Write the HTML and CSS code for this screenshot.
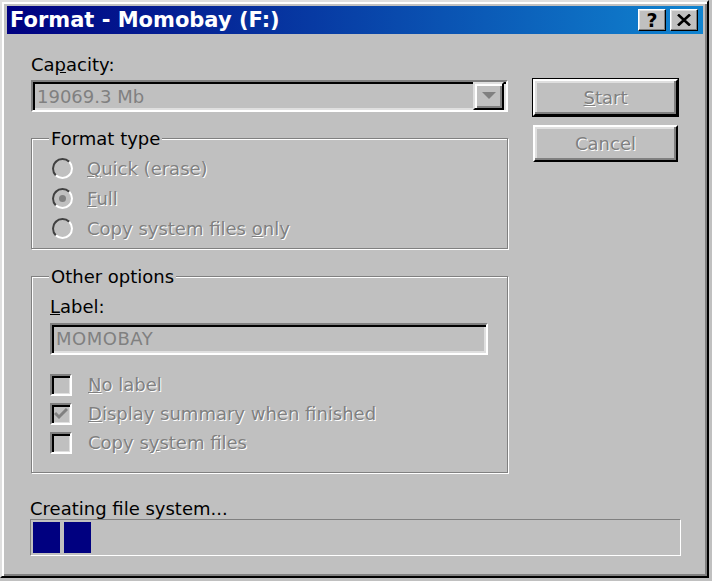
FILE: index.html
```html
<!DOCTYPE html>
<html lang="en">
<head>
    <meta charset="UTF-8">
    <title>Format - Momobay (F:)</title>
    <link rel="stylesheet" href="styles.css">
</head>
<body>
    <div class="window">
        <div class="titlebar">
            <span class="title">Format - Momobay (F:)</span>
            <div class="title-btns">
                <span class="tbtn">?</span>
                <span class="tbtn tbtn-close">
                    <svg width="14" height="12" viewBox="0 0 14 12"><path d="M1 0.5 L13 11.5 M13 0.5 L1 11.5" stroke="#000" stroke-width="2.6"/></svg>
                </span>
            </div>
        </div>
        <div class="content">
            <div class="main">
                <div class="left">
                    <div class="field-label">Ca<u>p</u>acity:</div>
                    <div class="combo">
                        <span class="combo-text">19069.3 Mb</span>
                        <span class="drop">
                            <svg width="14" height="8" viewBox="0 0 14 8"><path d="M0 0 H14 L7 7 Z" fill="#808080"/></svg>
                        </span>
                    </div>

                    <fieldset class="group format-group">
                        <legend>Format type</legend>
                        <div class="opt"><span class="radio"></span><span class="dis"><u>Q</u>uick (erase)</span></div>
                        <div class="opt"><span class="radio checked"></span><span class="dis"><u>F</u>ull</span></div>
                        <div class="opt"><span class="radio"></span><span class="dis">Copy system files <u>o</u>nly</span></div>
                    </fieldset>

                    <fieldset class="group options-group">
                        <legend>Other options</legend>
                        <div class="field-label"><u>L</u>abel:</div>
                        <div class="textbox">MOMOBAY</div>
                        <div class="checks">
                            <div class="chk-row"><span class="chk"></span><span class="dis"><u>N</u>o label</span></div>
                            <div class="chk-row">
                                <span class="chk">
                                    <svg width="14" height="12" viewBox="0 0 14 12"><path d="M1 5 L5 9 L13 1" fill="none" stroke="#808080" stroke-width="3"/></svg>
                                </span>
                                <span class="dis"><u>D</u>isplay summary when finished</span>
                            </div>
                            <div class="chk-row"><span class="chk"></span><span class="dis">Copy s<u>y</u>stem files</span></div>
                        </div>
                    </fieldset>
                </div>

                <div class="right">
                    <div class="btn btn-default"><span class="dis"><u>S</u>tart</span></div>
                    <div class="btn"><span class="dis">Cancel</span></div>
                </div>
            </div>

            <div class="status">Creating file system...</div>
            <div class="progress">
                <span class="block"></span>
                <span class="block"></span>
            </div>
        </div>
    </div>
</body>
</html>
```

FILE: styles.css
```css
html, body {
    margin: 0;
    padding: 0;
}
body {
    background: #c0c0c0;
    font-family: "DejaVu Sans", sans-serif;
    font-size: 18px;
    line-height: 21px;
    color: #000;
}
.window {
    box-sizing: border-box;
    width: 709px;
    height: 578px;
    background: #c0c0c0;
    border: 2px solid;
    border-color: #dfdfdf #000 #000 #dfdfdf;
    box-shadow: inset 2px 2px 0 #fff, inset -2px -2px 0 #808080;
    padding: 4px 4px 0 5px;
}
.titlebar {
    height: 28px;
    display: flex;
    align-items: center;
    justify-content: space-between;
    background: linear-gradient(to right, #000080, #1084d0);
    padding: 0 5px 0 3px;
}
.title {
    color: #fff;
    font-weight: bold;
    font-size: 21px;
}
.title-btns {
    display: flex;
    gap: 4px;
}
.tbtn {
    box-sizing: border-box;
    width: 28px;
    height: 22px;
    background: #c0c0c0;
    border: 1px solid;
    border-color: #fff #000 #000 #fff;
    box-shadow: inset -1px -1px 0 #808080, inset 1px 1px 0 #dfdfdf;
    display: flex;
    align-items: center;
    justify-content: center;
    font-weight: bold;
    font-size: 19px;
}
.content {
    padding: 20px 0 0 24px;
}
.main {
    display: grid;
    grid-template-columns: 477px 145px;
    column-gap: 25px;
}
.field-label {
    height: 21px;
}
.combo {
    box-sizing: border-box;
    margin-top: 5px;
    height: 32px;
    border: 2px solid;
    border-color: #808080 #fff #fff #808080;
    box-shadow: inset 2px 2px 0 #000, inset -2px -2px 0 #dfdfdf;
    display: flex;
    align-items: center;
    justify-content: space-between;
    padding: 0 2px 0 4px;
}
.combo-text {
    color: #808080;
}
.drop {
    box-sizing: border-box;
    width: 31px;
    height: 28px;
    border: 2px solid;
    border-color: #dfdfdf #000 #000 #dfdfdf;
    box-shadow: inset 2px 2px 0 #fff, inset -2px -2px 0 #808080;
    display: flex;
    align-items: center;
    justify-content: center;
}

.group {
    margin: 0;
    border: 1px solid #808080;
    box-shadow: inset 1px 1px 0 #fff, 1px 1px 0 #fff;
    padding: 0 8px 0 18px;
    min-width: 0;
}
.group legend {
    padding: 0 2px;
    margin-left: -1px;
    background: #c0c0c0;
}
.format-group {
    margin-top: 16px;
    padding-top: 4px;
    padding-bottom: 5px;
}
.opt {
    height: 30px;
    display: flex;
    align-items: center;
    padding-left: 2px;
}
.radio {
    box-sizing: border-box;
    width: 21px;
    height: 21px;
    border-radius: 50%;
    border: 2px solid;
    border-color: #404040 #fff #fff #404040;
    margin-right: 14px;
    display: flex;
    align-items: center;
    justify-content: center;
}
.radio.checked::after {
    content: "";
    width: 7px;
    height: 7px;
    border-radius: 50%;
    background: #808080;
}
.dis {
    color: #808080;
    text-shadow: 1px 1px 0 #fff;
}

.options-group {
    margin-top: 17px;
    padding-top: 9px;
    padding-bottom: 15px;
}
.textbox {
    box-sizing: border-box;
    margin-top: 6px;
    width: 438px;
    height: 32px;
    border: 2px solid;
    border-color: #808080 #fff #fff #808080;
    box-shadow: inset 2px 2px 0 #000, inset -2px -2px 0 #dfdfdf;
    color: #808080;
    padding: 3px 4px;
    letter-spacing: 0.5px;
}
.checks {
    margin-top: 15px;
}
.chk-row {
    height: 29px;
    display: flex;
    align-items: center;
}
.chk {
    box-sizing: border-box;
    width: 22px;
    height: 22px;
    border: 2px solid;
    border-color: #808080 #fff #fff #808080;
    box-shadow: inset 2px 2px 0 #000, inset -1px -1px 0 #dfdfdf;
    margin-right: 16px;
    display: flex;
    align-items: center;
    justify-content: center;
}

.right {
    padding-top: 25px;
    display: flex;
    flex-direction: column;
    gap: 9px;
}
.btn {
    box-sizing: border-box;
    height: 37px;
    border: 2px solid;
    border-color: #fff #000 #000 #fff;
    box-shadow: inset -2px -2px 0 #808080, inset 2px 2px 0 #dfdfdf;
    display: flex;
    align-items: center;
    justify-content: center;
}
.btn-default {
    outline: 1px solid #000;
}

.status {
    margin-top: 25px;
    margin-left: -1px;
}
.progress {
    box-sizing: border-box;
    width: 651px;
    height: 37px;
    margin-left: -1px;
    border: 1px solid;
    border-color: #808080 #fff #fff #808080;
    padding: 2px;
    display: flex;
    gap: 4px;
}
.block {
    width: 27px;
    background: #000080;
}
```
